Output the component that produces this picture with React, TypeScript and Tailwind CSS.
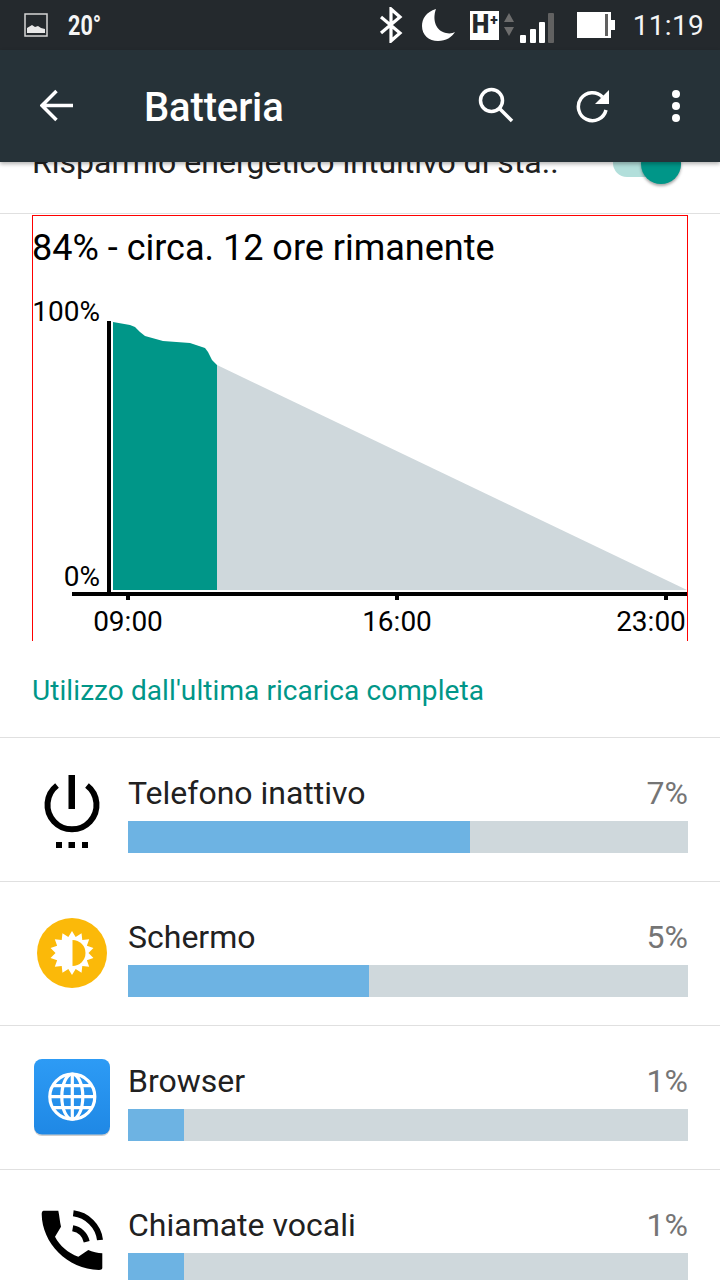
const rows = [
  { name: "Telefono inattivo", pct: "7%", fill: 342, icon: <PowerIcon /> },
  { name: "Schermo", pct: "5%", fill: 241, icon: <SunIcon /> },
  { name: "Browser", pct: "1%", fill: 56, icon: <GlobeIcon /> },
  { name: "Chiamate vocali", pct: "1%", fill: 56, icon: <PhoneIcon /> },
];

function PowerIcon() {
  return (
    <svg width="80" height="80" viewBox="0 0 80 80">
      <path d="M25 15.500a24.500 24.500 0 1 0 30 0" fill="none" stroke="#000" strokeWidth="6" />
      <rect x="36.500" y="5" width="6.500" height="34" fill="#000" />
      <rect x="24" y="72" width="6" height="6" fill="#000" />
      <rect x="36.500" y="72" width="6.500" height="6" fill="#000" />
      <rect x="50" y="72" width="6" height="6" fill="#000" />
    </svg>
  );
}

function SunIcon() {
  const spikes = Array.from({ length: 14 }, (_, i) => {
    const a = (i * Math.PI * 2) / 14 - Math.PI / 2;
    const b = a + Math.PI / 14;
    return `${40 + 22 * Math.cos(a)},${39 + 22 * Math.sin(a)} ${40 + 16.5 * Math.cos(b)},${39 + 16.5 * Math.sin(b)}`;
  }).join(" ");
  return (
    <svg width="80" height="80" viewBox="0 0 80 80">
      <circle cx="40" cy="39" r="35" fill="#fbb909" />
      <polygon points={spikes} fill="#fff" />
      <path d="M40.500 26a13 13 0 0 1 0 26z" fill="#fbb909" />
    </svg>
  );
}

function GlobeIcon() {
  return (
    <svg width="80" height="80" viewBox="0 0 80 80">
      <defs>
        <linearGradient id="g" x1="0" y1="0" x2="0" y2="1">
          <stop offset="0" stopColor="#2d9bf5" />
          <stop offset="1" stopColor="#1f88e5" />
        </linearGradient>
      </defs>
      <rect x="2" y="2" width="76" height="76" rx="8" fill="#9e9e9e" opacity="0.5" />
      <rect x="2" y="1" width="76" height="75.500" rx="8" fill="url(#g)" />
      <g fill="none" stroke="#fff" strokeWidth="3.200">
        <circle cx="40.300" cy="38.700" r="22.500" />
        <ellipse cx="40.300" cy="38.700" rx="10.500" ry="22.500" />
        <path d="M40.300 16v45M18 38.700h45M21 27.700h39M21 49.700h39" />
      </g>
    </svg>
  );
}

function PhoneIcon() {
  return (
    <svg width="80" height="80" viewBox="0 0 80 80">
      <path
        d="M11.500 8.700H26.300C27.500 14 27.800 19.500 29 24.700L23 34.700C28 44 36 51 46.300 54.700L56.300 48C60 50 66 51 70.300 51.300V66C70.300 67.200 69 68 67 68C35 67 10 41 9.700 12C9.700 10 10.500 8.700 11.500 8.700z"
        fill="#000"
      />
      <path d="M41.300 11.300C55 13 66.500 24 68 38" fill="none" stroke="#000" strokeWidth="6" />
      <path d="M40.700 26.300C47.500 27.500 53 32.500 54.700 39.700" fill="none" stroke="#000" strokeWidth="6" />
    </svg>
  );
}

function StatusIcons() {
  return (
    <div className="ml-auto flex items-center">
      <svg width="24" height="36" viewBox="0 0 24 36">
        <path d="M2 10l19 16-9 8V2l9 8L2 26" fill="none" stroke="#fff" strokeWidth="3.200" strokeLinejoin="miter" />
      </svg>
      <svg width="36" height="34" viewBox="0 0 36 34" className="ml-[18px]">
        <path d="M15 1C5 4 1 11 1 18c0 9 7 15 16 15 8 0 14-4 17-9-2 1-5 2-9 1C15 23 11 12 15 1z" fill="#fff" />
      </svg>
      <div className="relative ml-[13px] h-[29px] w-[29px] bg-white font-['Roboto'] font-black leading-[28px] text-[#24292d]">
        <span className="pl-[2px] text-[25px]">H</span>
        <span className="absolute right-[1px] top-[-5px] text-[14px]">+</span>
      </div>
      <svg width="10" height="26" viewBox="0 0 10 26" className="ml-[5px]">
        <path d="M5 1l5 9H0zM0 15h10l-5 9z" fill="#6d6d6d" />
      </svg>
      <svg width="34" height="30" viewBox="0 0 34 30" className="ml-[6px] mt-[6px]">
        <rect x="0" y="22" width="6" height="8" rx="1" fill="#fff" />
        <rect x="10" y="16" width="6" height="14" rx="1" fill="#fff" />
        <rect x="19" y="9" width="6" height="21" rx="1" fill="#fff" />
        <rect x="28" y="0" width="6" height="30" rx="1" fill="#616161" />
      </svg>
      <svg width="38" height="26" viewBox="0 0 38 26" className="ml-[23px]">
        <rect x="0" y="0" width="34" height="26" fill="#fff" />
        <rect x="34" y="8" width="4" height="10" fill="#fff" />
        <rect x="28" y="2" width="3" height="22" fill="#616161" />
      </svg>
      <span className="ml-[18px] mr-[16px] mt-[2px] font-['Roboto'] text-[28px] leading-none tracking-[0.3px] text-[#f5f5f5]">11:19</span>
    </div>
  );
}

export default function App() {
  return (
    <div className="h-[1280px] w-[720px] overflow-hidden bg-white font-['Roboto',sans-serif]">
      <div className="relative z-10 flex h-[50px] items-center bg-[#24292d]">
        <svg width="24" height="24" viewBox="0 0 24 24" className="ml-[24px]">
          <rect x="1" y="1" width="22" height="22" fill="none" stroke="#d5d5d5" strokeWidth="1.500" />
          <path d="M3 20v-5l5-3 3 2 3-1 3 2 4 1v4z" fill="#e8e8e8" />
        </svg>
        <span className="ml-[20px] mt-[3px] origin-left scale-x-[0.8] text-[27px] font-bold leading-none text-[#f5f5f5]">20°</span>
        <StatusIcons />
      </div>

      <div className="relative z-10 flex h-[112px] items-center bg-[#263238] shadow-[0_2px_4px_rgba(0,0,0,0.3)]">
        <svg width="34" height="34" viewBox="0 0 34 34" className="ml-[40px]">
          <path d="M33 16.500H3M16.500 2L2 16.500 16.500 31" fill="none" stroke="#fff" strokeWidth="3.500" />
        </svg>
        <span className="ml-[70px] mt-[4px] text-[40px] font-medium leading-none tracking-[-0.15px] text-white">Batteria</span>
        <svg width="36" height="36" viewBox="0 0 36 36" className="ml-auto mt-[-2px]">
          <circle cx="13.500" cy="13.500" r="11" fill="none" stroke="#fff" strokeWidth="3.500" />
          <path d="M21.500 21.500L34 34" fill="none" stroke="#fff" strokeWidth="3.500" />
        </svg>
        <svg width="34" height="34" viewBox="0 0 34 34" className="ml-[62px]">
          <path d="M30 21a14 14 0 1 1-3.500-13" fill="none" stroke="#fff" strokeWidth="3.500" />
          <path d="M33 1v14H19z" fill="#fff" />
        </svg>
        <div className="ml-[62px] mr-[40px] flex flex-col gap-[4px]">
          <div className="h-[8px] w-[8px] rounded-full bg-white" />
          <div className="h-[8px] w-[8px] rounded-full bg-white" />
          <div className="h-[8px] w-[8px] rounded-full bg-white" />
        </div>
      </div>

      <div className="mt-[-48px] flex h-[100px] items-end justify-between border-b border-[#e0e0e0] pb-[33px] pl-[32px] pr-[39px]">
        <span className="text-[32px] leading-[36px] text-[#212121]">Risparmio energetico intuitivo di sta..</span>
        <div className="relative mb-[3px] h-[28px] w-[68px] rounded-full bg-[#b2dfdb]">
          <div className="absolute bottom-[-7px] right-0 h-[40px] w-[40px] rounded-full bg-[#009688] shadow-[0_2px_3px_rgba(0,0,0,0.35)]" />
        </div>
      </div>

      <div className="mx-[32px] mt-[1px] h-[426px] border-x border-t border-[#ff0000]">
        <div className="ml-[-1px] pt-[12px] text-[36px] leading-[40px] text-black">84% - circa. 12 ore rimanente</div>
        <svg width="654" height="373" viewBox="33 268 654 373" className="block font-['Roboto']">
          <polygon points="217,365 687,590 217,590" fill="#cfd8dc" />
          <polygon
            points="113,322 130,325 135,327 140,332 145,336 163,341 190,343 205,348 208,352 212,360 217,365 217,590 113,590"
            fill="#009688"
          />
          <rect x="107" y="321" width="4" height="273" fill="#000" />
          <rect x="72" y="592" width="616" height="4" fill="#000" />
          <rect x="126" y="596" width="4" height="4" fill="#000" />
          <rect x="395" y="596" width="4" height="4" fill="#000" />
          <rect x="664" y="596" width="4" height="4" fill="#000" />
          <text x="100" y="321" textAnchor="end" fontSize="28" fill="#000">100%</text>
          <text x="100" y="586" textAnchor="end" fontSize="28" fill="#000">0%</text>
          <text x="128" y="631" textAnchor="middle" fontSize="28" fill="#000">09:00</text>
          <text x="397" y="631" textAnchor="middle" fontSize="28" fill="#000">16:00</text>
          <text x="651" y="631" textAnchor="middle" fontSize="28" fill="#000">23:00</text>
        </svg>
      </div>

      <div className="flex h-[97px] items-center border-b border-[#e0e0e0] pl-[32px] pt-[4px] text-[28px] leading-none tracking-[0.08px] text-[#009688]">
        Utilizzo dall'ultima ricarica completa
      </div>

      {rows.map((r) => (
        <div key={r.name} className="flex h-[144px] border-b border-[#e0e0e0] pl-[32px] pr-[32px]">
          <div className="mt-[32px] h-[80px] w-[80px] shrink-0">{r.icon}</div>
          <div className="ml-[16px] flex-1 pt-[37px]">
            <div className="flex items-center justify-between text-[32px] leading-[36px]">
              <span className="text-[#212121]">{r.name}</span>
              <span className="text-[#757575]">{r.pct}</span>
            </div>
            <div className="mt-[10px] h-[32px] bg-[#cfd8dc]">
              <div className="h-full bg-[#6db3e3]" style={{ width: r.fill }} />
            </div>
          </div>
        </div>
      ))}
    </div>
  );
}
